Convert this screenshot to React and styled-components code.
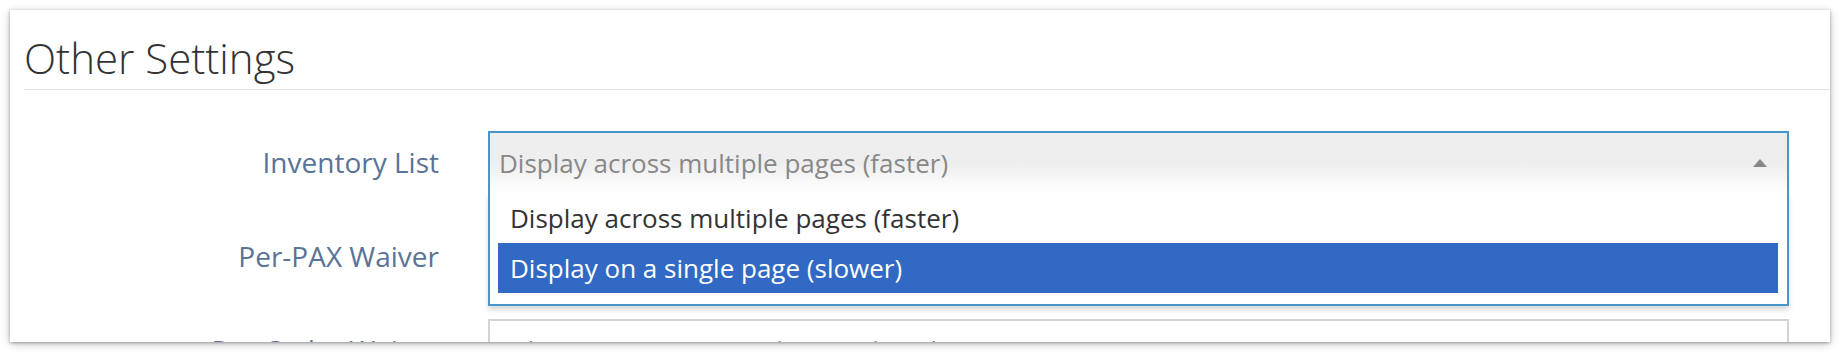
import React, { useState } from "react";
import styled, { createGlobalStyle } from "styled-components";

const GlobalStyle = createGlobalStyle`
  body {
    margin: 0;
    background: #fff;
    font-family: "Open Sans", "Liberation Sans", sans-serif;
  }
`;

const Page = styled.div`
  padding: 10px;
`;

const Panel = styled.section`
  width: 1820px;
  height: 332px;
  box-sizing: border-box;
  padding-left: 14px;
  background: #fff;
  overflow: hidden;
  box-shadow: 0 1px 3px rgba(0, 0, 0, 0.3), 0 2px 9px rgba(0, 0, 0, 0.22);
`;

const Legend = styled.h2`
  margin: 0;
  padding: 24px 0 7px;
  font-size: 42px;
  line-height: 48px;
  font-weight: 300;
  color: #333;
  border-bottom: 1px solid #e5e5e5;
`;

const Form = styled.div`
  display: flex;
  flex-direction: column;
  gap: 32px;
  padding-top: 41px;
`;

const Row = styled.div`
  display: grid;
  grid-template-columns: 415px 1301px;
  column-gap: 49px;
`;

const Label = styled.label`
  text-align: right;
  font-size: 28px;
  line-height: 62px;
  color: #5a7396;
`;

const SelectWrap = styled.div`
  position: relative;
  z-index: ${(p) => (p.$open ? 2 : 1)};
`;

const SelectHead = styled.div`
  height: 62px;
  box-sizing: border-box;
  display: flex;
  align-items: center;
  justify-content: space-between;
  padding: 0 20px 0 9px;
  font-size: 26px;
  color: #888;
  border: 2px solid ${(p) => (p.$open ? "#4996cd" : "#d4d4d4")};
  border-bottom: ${(p) => (p.$open ? "none" : "2px solid #d4d4d4")};
  background: ${(p) =>
    p.$open ? "linear-gradient(to top, #fff 0%, #eee 50%)" : "#fff"};
  cursor: pointer;
`;

const Arrow = styled.span`
  width: 0;
  height: 0;
  border-left: 7px solid transparent;
  border-right: 7px solid transparent;
  border-bottom: 8px solid #888;
  transform: ${(p) => (p.$open ? "none" : "rotate(180deg)")};
`;

const Dropdown = styled.ul`
  position: absolute;
  top: 62px;
  left: 0;
  right: 0;
  margin: 0;
  padding: 0 9px 11px 8px;
  list-style: none;
  background: #fff;
  border: 2px solid #4996cd;
  border-top: none;
  box-shadow: 0 4px 5px rgba(0, 0, 0, 0.15);
`;

const Option = styled.li`
  height: 50px;
  line-height: 50px;
  padding-left: 12px;
  font-size: 26px;
  color: ${(p) => (p.$active ? "#fff" : "#333")};
  background: ${(p) => (p.$active ? "#3169c4" : "transparent")};
  cursor: pointer;
`;

const inventoryOptions = [
  "Display across multiple pages (faster)",
  "Display on a single page (slower)",
];

const Select = ({ value, options, open, active, placeholder }) => (
  <SelectWrap $open={open}>
    <SelectHead $open={open}>
      <span>{value || placeholder}</span>
      <Arrow $open={open} />
    </SelectHead>
    {open && (
      <Dropdown>
        {options.map((o, i) => (
          <Option key={o} $active={i === active}>
            {o}
          </Option>
        ))}
      </Dropdown>
    )}
  </SelectWrap>
);

const App = () => {
  const [active] = useState(1);
  return (
    <Page>
      <GlobalStyle />
      <Panel>
        <Legend>Other Settings</Legend>
        <Form>
          <Row>
            <Label>Inventory List</Label>
            <Select
              value={inventoryOptions[0]}
              options={inventoryOptions}
              open={true}
              active={active}
            />
          </Row>
          <Row>
            <Label>Per-PAX Waiver</Label>
            <Select placeholder="" options={[]} />
          </Row>
          <Row>
            <Label>Per-Order Waiver</Label>
            <Select placeholder="Select a waiver to attach to each order" options={[]} />
          </Row>
        </Form>
      </Panel>
    </Page>
  );
};

export default App;
